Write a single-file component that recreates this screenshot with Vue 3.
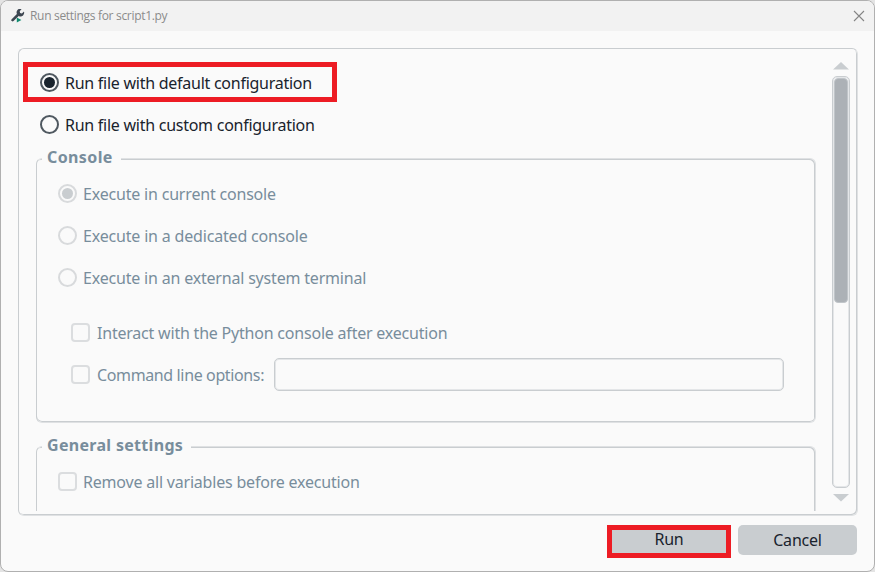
<script setup>
import { ref } from 'vue'

const mode = ref('default')
const modes = [
  { id: 'default', label: 'Run file with default configuration', cls: 'w-default' },
  { id: 'custom', label: 'Run file with custom configuration', cls: 'w-custom' },
]
const consoles = [
  { label: 'Execute in current console', checked: true, cls: 'w-current' },
  { label: 'Execute in a dedicated console', checked: false, cls: 'w-dedicated' },
  { label: 'Execute in an external system terminal', checked: false, cls: 'w-external' },
]
</script>

<template>
  <div class="window">
    <header class="titlebar">
      <svg class="app-icon" width="14" height="14" viewBox="0 0 14 14">
        <path d="M1.6 11.2 L7.3 5.5" stroke="#3d4651" stroke-width="2.6" stroke-linecap="round" />
        <path d="M10.6 0A3.7 3.7 0 0 0 5.8 4.7L8.2 7.2A3.7 3.7 0 0 0 13 2.6L10.9 4.5 9.1 4.1 8.7 2.3Z" fill="#3d4651" />
        <path d="M5.8 8.6 10.4 11 5.8 13.4Z" fill="#118b70" />
      </svg>
      <span class="title">Run settings for script1.py</span>
      <svg class="close" width="12" height="12" viewBox="0 0 12 12">
        <path d="M1 1 11 11M11 1 1 11" stroke="#858585" stroke-width="1.1" />
      </svg>
    </header>

    <main class="panel">
      <div class="content">
        <div class="modes">
          <label v-for="m in modes" :key="m.id" class="mode" :class="{ marked: m.id === 'default' }" @click="mode = m.id">
            <span class="radio" :class="{ on: mode === m.id }"></span>
            <span class="text" :class="m.cls">{{ m.label }}</span>
          </label>
        </div>

        <section class="group console">
          <h2 class="legend w-console">Console</h2>
          <div v-for="c in consoles" :key="c.label" class="row">
            <span class="radio off" :class="{ on: c.checked }"></span>
            <span class="text" :class="c.cls">{{ c.label }}</span>
          </div>
          <div class="row nested first">
            <span class="check"></span>
            <span class="text w-interact">Interact with the Python console after execution</span>
          </div>
          <div class="row nested">
            <span class="check"></span>
            <span class="text w-command">Command line options:</span>
            <span class="field"></span>
          </div>
        </section>

        <section class="group general">
          <h2 class="legend w-general">General settings</h2>
          <div class="row">
            <span class="check"></span>
            <span class="text w-remove">Remove all variables before execution</span>
          </div>
        </section>
      </div>

      <div class="scrollbar">
        <svg width="16" height="8" viewBox="0 0 16 8"><path d="M0 7.5 8 0 16 7.5Z" fill="#c9cdd0" /></svg>
        <div class="track"><div class="thumb"></div></div>
        <svg width="16" height="8" viewBox="0 0 16 8"><path d="M0 0H16L8 7.5Z" fill="#c9cdd0" /></svg>
      </div>
    </main>

    <footer class="actions">
      <button class="btn run">Run</button>
      <button class="btn cancel">Cancel</button>
    </footer>
  </div>
</template>

<style>
body {
  background: #e4e4e4;
}
</style>

<style scoped>
* {
  box-sizing: border-box;
}
.window {
  width: 875px;
  height: 572px;
  border: 1px solid #b0b0b0;
  border-radius: 8px;
  overflow: hidden;
  background: #fafafa;
  font-family: "Noto Sans", "Open Sans", sans-serif;
  font-size: 16px;
  color: #19232d;
}
.titlebar {
  height: 30px;
  display: flex;
  align-items: center;
  padding: 0 9px 0 10px;
  background: #f2f2f2;
}
.title {
  margin-left: 5px;
  font-family: "Open Sans", sans-serif;
  font-size: 12px;
  letter-spacing: -0.31px;
  line-height: 16px;
  color: #8b8b8b;
  white-space: nowrap;
}
.close {
  margin-left: auto;
}
.panel {
  width: 840px;
  height: 468px;
  margin: 17px 0 0 17px;
  display: flex;
  justify-content: space-between;
  border: 1px solid #c9cdd0;
  border-radius: 6px;
  border-right-color: #dfe1e3;
  border-bottom-color: #dfe1e3;
  box-shadow: inset -1px -1px 0 #c9cdd0;
  padding: 0 7px 0 4px;
}
.content {
  width: 793px;
  height: 462px;
  overflow: hidden;
}
.modes {
  padding-top: 13px;
}
.mode {
  display: flex;
  align-items: center;
  width: 314px;
  height: 40px;
  padding-left: 17px;
}
.marked {
  border: 5px solid #ed1c24;
  padding-left: 12px;
}
.mode + .mode {
  height: 44px;
}
.text {
  margin-left: 6px;
  padding-top: 2px;
  line-height: 24px;
  white-space: nowrap;
}
.w-default,
.w-custom {
  letter-spacing: -0.26px;
}
.w-current,
.w-external {
  letter-spacing: -0.19px;
}
.w-dedicated {
  letter-spacing: -0.18px;
}
.w-interact {
  letter-spacing: -0.21px;
}
.w-command {
  width: 167px;
  letter-spacing: -0.37px;
}
.w-remove {
  letter-spacing: -0.2px;
}
.w-console {
  letter-spacing: 0.4px;
}
.w-general {
  letter-spacing: 0.31px;
}
.radio {
  flex: none;
  width: 19px;
  height: 19px;
  border: 2px solid #4f5860;
  border-radius: 50%;
  display: grid;
  place-items: center;
}
.radio.on::after {
  content: "";
  width: 11px;
  height: 11px;
  border-radius: 50%;
  background: #19232d;
}
.radio.off {
  border-color: #d8dadc;
}
.radio.off.on::after {
  background: #c9cdd0;
}
.check {
  flex: none;
  width: 19px;
  height: 19px;
  border: 2px solid #dbdddf;
  border-radius: 4px;
}
.group {
  position: relative;
  width: 780px;
  margin-left: 13px;
  border: 1px solid #c9cdd0;
  border-top-color: #dfe1e3;
  border-right-color: #dfe1e3;
  border-radius: 6px;
  box-shadow: inset -1px 1px 0 #c9cdd0;
  color: #788d9c;
}
.console {
  height: 265px;
  margin-top: 12px;
  padding: 13px 0 0 21px;
  border-bottom-color: #dfe1e3;
  box-shadow: inset -1px 1px 0 #c9cdd0, inset 0 -1px 0 #c9cdd0;
}
.general {
  height: 120px;
  margin-top: 23px;
  padding: 13px 0 0 21px;
}
.legend {
  position: absolute;
  top: -14px;
  left: 5px;
  margin: 0;
  padding: 0 8px 0 5px;
  background: #fafafa;
  font-size: 16px;
  font-weight: 700;
  line-height: 24px;
  white-space: nowrap;
}
.row {
  display: flex;
  align-items: center;
  height: 42px;
}
.nested {
  padding-left: 13px;
}
.first {
  margin-top: 13px;
}
.field {
  width: 510px;
  height: 33px;
  margin-left: 10px;
  border: 1px solid #c9cdd0;
  border-radius: 5px;
  box-shadow: inset 0 0 0 1px #e4e6e8;
}
.nested .text {
  margin-left: 7px;
}
.scrollbar {
  width: 18px;
  padding: 13px 0 12px;
  display: flex;
  flex-direction: column;
  align-items: center;
}
.scrollbar svg {
  flex: none;
}
.track {
  width: 18px;
  height: 412px;
  margin: 6px 0;
  padding: 1px;
  border: 1px solid #c9cdd0;
  border-radius: 5px;
  box-shadow: inset 0 0 0 1px #e4e6e8;
}
.thumb {
  height: 225px;
  border: 1px solid #c0c5c9;
  border-radius: 4px;
  background: #acb1b6;
}
.actions {
  display: flex;
  align-items: flex-start;
  justify-content: flex-end;
  gap: 7px;
  padding: 9px 17px 0 0;
}
.btn {
  padding: 0;
  border: 0;
  background: #c9cdd0;
  color: #19232d;
  font: 16px/24px "Noto Sans", sans-serif;
  letter-spacing: -0.2px;
}
.run {
  width: 124px;
  height: 33px;
  border: 5px solid #ed1c24;
  line-height: 19px;
  padding-bottom: 4px;
}
.cancel {
  width: 119px;
  height: 30px;
  border-radius: 5px;
}
</style>
